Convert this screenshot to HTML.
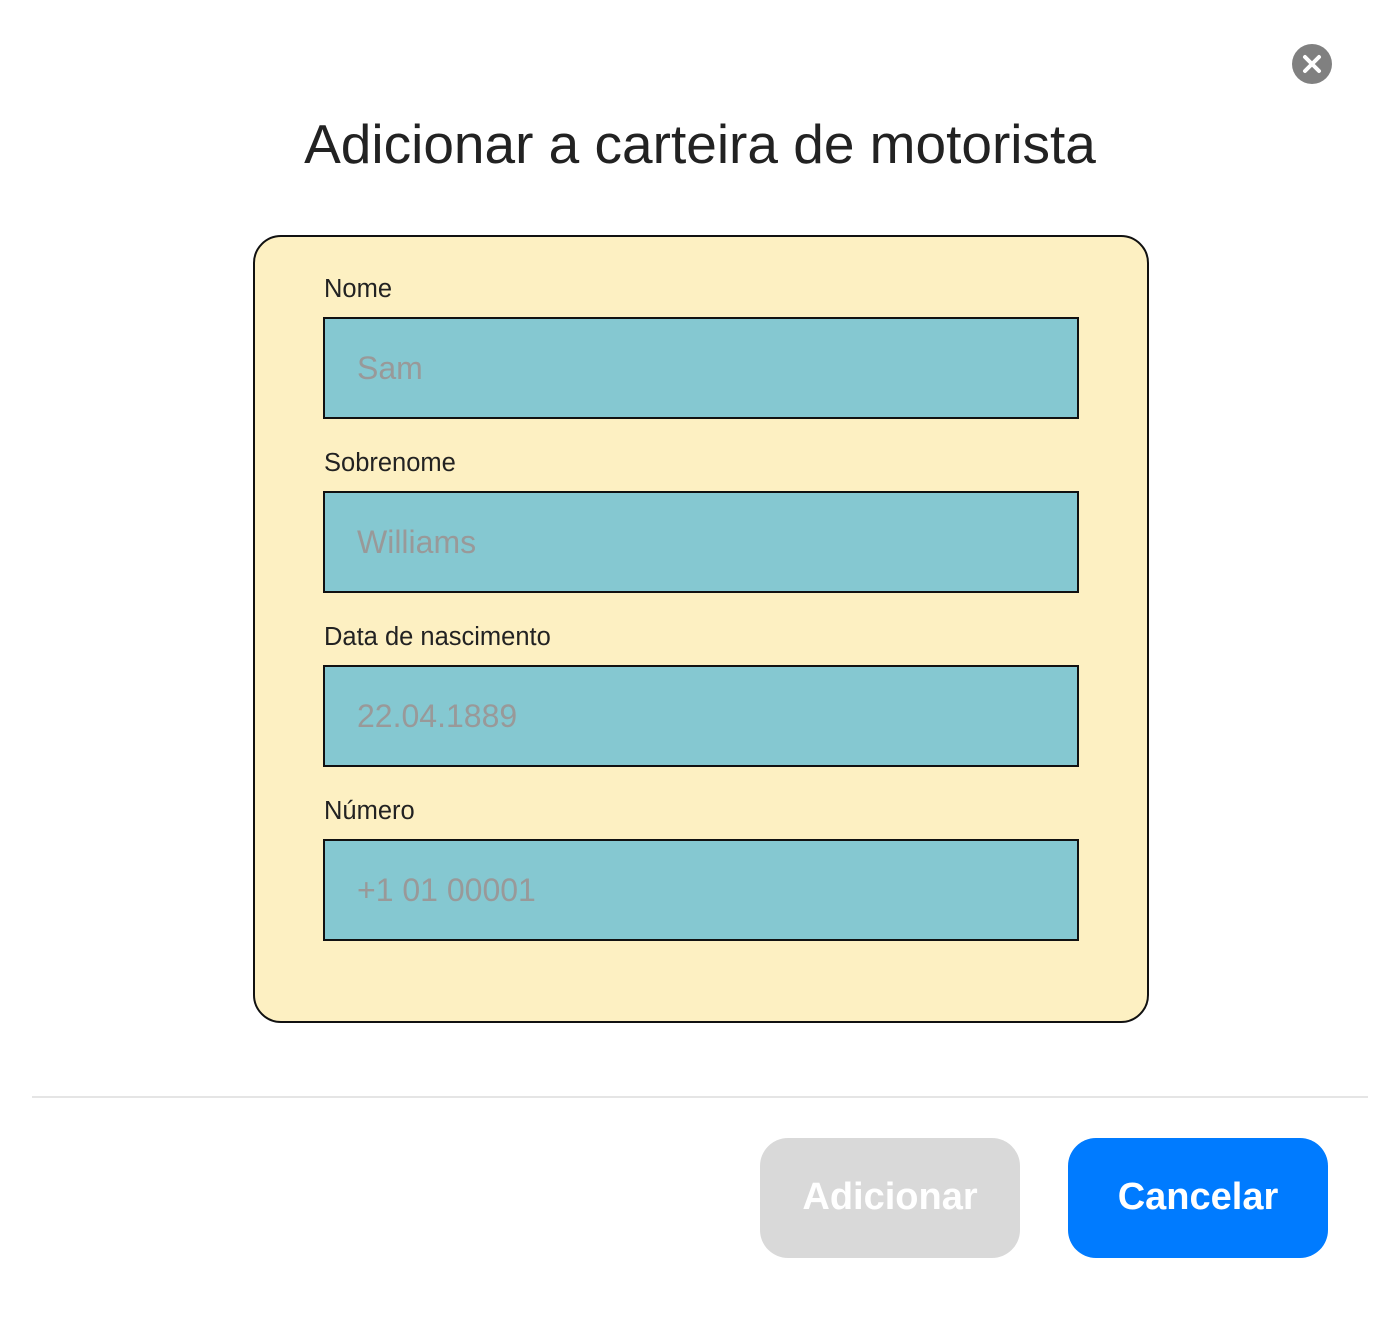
<!DOCTYPE html>
<html><head><style>
body{margin:0;width:1400px;height:1328px;background:#fff;font-family:"Liberation Sans",sans-serif;position:relative;overflow:hidden}
.close{position:absolute;left:1292px;top:44px;width:40px;height:40px;border-radius:50%;background:#808080}
h1{position:absolute;top:112px;left:0;width:1400px;text-align:center;margin:0;font-size:55px;font-weight:normal;color:#222;line-height:64px}
.card{position:absolute;left:253px;top:235px;width:892px;height:784px;background:#fdf0c2;border:2px solid #111;border-radius:28px}
.lbl{position:absolute;left:324px;font-size:25.5px;color:#222}
.inp{position:absolute;left:323px;height:98px;background:#85c8d1;border:2px solid #111;font-size:32px;color:#999;line-height:98px;padding-left:32px;width:720px}
.div{position:absolute;left:32px;top:1096px;width:1336px;height:2px;background:#e5e5e5}
.btn{position:absolute;top:1138px;width:260px;height:120px;border-radius:28px;color:#fff;font-weight:bold;font-size:38px;text-align:center;line-height:118px}
</style></head><body>
<div class="close"><svg width="40" height="40"><path d="M13 13L27 27M27 13L13 27" stroke="#fff" stroke-width="4" stroke-linecap="round"/></svg></div>
<h1>Adicionar a carteira de motorista</h1>
<div class="card"></div>
<div class="lbl" style="top:275px">Nome</div>
<div class="inp" style="top:317px">Sam</div>
<div class="lbl" style="top:449px">Sobrenome</div>
<div class="inp" style="top:491px">Williams</div>
<div class="lbl" style="top:623px">Data de nascimento</div>
<div class="inp" style="top:665px">22.04.1889</div>
<div class="lbl" style="top:797px">Número</div>
<div class="inp" style="top:839px">+1 01 00001</div>
<div class="div"></div>
<div class="btn" style="left:760px;background:#d9d9d9">Adicionar</div>
<div class="btn" style="left:1068px;background:#007bff">Cancelar</div>
</body></html>
